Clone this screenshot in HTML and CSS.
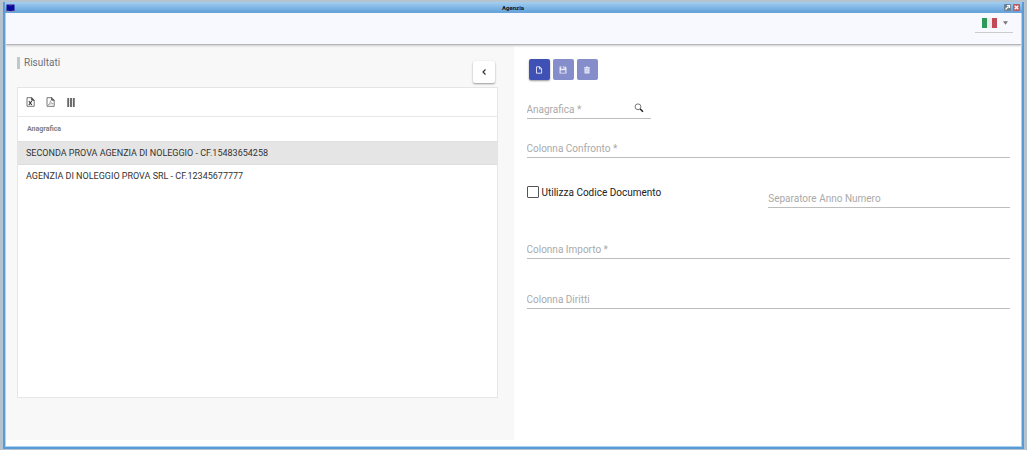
FILE: index.html
```html
<!DOCTYPE html>
<html lang="it">
<head>
<meta charset="utf-8">
<title>Agenzia</title>
<link rel="stylesheet" href="styles.css">
</head>
<body>
<div class="window">
  <div class="titlebar">
    <svg class="app-icon" viewBox="0 0 9 8" aria-hidden="true"><path d="M.5.500h8V7h-8z" fill="#0a0a96"/><path d="M1 .5h2v.6h3V.5h2" fill="none" stroke="#8a6ab0" stroke-width=".6"/><path d="M.5 7h2.500v.6h3V7h2.500" fill="none" stroke="#b080a0" stroke-width=".6"/></svg>
    <h1 class="window-title">Agenzia</h1>
    <div class="window-actions">
      <button class="win-btn" aria-label="Ingrandisci"><svg viewBox="0 0 7 7"><path d="M1.5 5.5l3-3M3 1.5h2.5V4" fill="none" stroke="#fff" stroke-width="1.2"/></svg></button>
      <button class="win-btn win-close" aria-label="Chiudi"><svg viewBox="0 0 7 7"><path d="M1.7 1.7l3.6 3.6M5.3 1.7L1.7 5.3" fill="none" stroke="#fff" stroke-width="1.3"/></svg></button>
    </div>
  </div>
  <header class="topbar">
    <button class="language" aria-label="Lingua: italiano">
      <svg class="flag" viewBox="0 0 15 10"><path d="M0 0h5v10H0z" fill="#2f9a58"/><path d="M5 0h5v10H5z" fill="#ececec"/><path d="M10 0h5v10h-5z" fill="#c24a55"/></svg>
      <svg class="caret" viewBox="0 0 6 4"><path d="M0 0h6L3 4z" fill="#777"/></svg>
    </button>
  </header>
  <main class="content">
    <section class="results">
      <div class="results-head">
        <h2 class="results-title">Risultati</h2>
        <button class="collapse" aria-label="Comprimi"><svg viewBox="0 0 6 8"><path d="M4.5 1.5L2 4l2.5 2.5" fill="none" stroke="#333" stroke-width="1.2"/></svg></button>
      </div>
      <div class="card">
        <div class="tools">
          <button class="tool" aria-label="Esporta Excel"><svg viewBox="0 0 9 10"><path d="M1 .7h4.8L8.2 3v6.3H1z" fill="#fff" stroke="#666" stroke-width=".9"/><path d="M5.6.5v2.7h2.7" fill="#555" stroke="#333" stroke-width=".7"/><path d="M2.8 4l3 4M5.8 4l-3 4" stroke="#333" stroke-width="1.1"/></svg></button>
          <button class="tool" aria-label="Esporta PDF"><svg viewBox="0 0 9 10"><path d="M1 .7h4.8L8.2 3v6.3H1z" fill="#fff" stroke="#666" stroke-width=".9"/><path d="M5.6.5v2.7h2.7" fill="#777" stroke="#333" stroke-width=".7"/><path d="M2 8c1.6-1 2.4-2.6 2.4-4.3C4.5 5.500 5.500 6.700 7.200 6.800 5 6.600 3.500 7 2 8z" fill="none" stroke="#888" stroke-width=".6"/></svg></button>
          <button class="tool" aria-label="Colonne"><svg viewBox="0 0 9 10"><path d="M2.200 1v9M5 1v9M7.800 1v9" stroke="#666" stroke-width="1.900"/></svg></button>
        </div>
        <table class="grid">
          <thead><tr><th scope="col">Anagrafica</th></tr></thead>
          <tbody>
            <tr class="selected"><td>SECONDA PROVA AGENZIA DI NOLEGGIO - CF.15483654258</td></tr>
            <tr><td>AGENZIA DI NOLEGGIO PROVA SRL - CF.12345677777</td></tr>
          </tbody>
        </table>
      </div>
    </section>
    <form class="detail">
      <div class="actions">
        <button type="button" class="action" aria-label="Nuovo"><svg viewBox="0 0 8 8"><path d="M1.500 .8h3.200l1.900 1.900v4.500H1.500zM4.500 .8v2.100h2.100" fill="none" stroke="#fff" stroke-width=".8"/></svg></button>
        <button type="button" class="action" aria-label="Salva" disabled><svg viewBox="0 0 8 8"><path d="M.5.5h5.800L7.500 1.700v5.800h-7z" fill="#e6e8f5"/><path d="M2.200.5h3.200v2.200H2.200zM1.700 4.300h4.600v2.400H1.700z" fill="#858dca"/><path d="M4.200.8h.8v1.500h-.8z" fill="#e6e8f5"/></svg></button>
        <button type="button" class="action" aria-label="Elimina" disabled><svg viewBox="0 0 8 8"><path d="M1 1.300h2V.5h2v.8h2v1H1zM1.500 2.500h5v5h-5z" fill="#e6e8f5"/><path d="M3.200 3.300v3.300M4.800 3.300v3.300" stroke="#858dca" stroke-width=".4"/></svg></button>
      </div>
      <div class="field lookup">
        <input type="text" placeholder="Anagrafica *" aria-label="Anagrafica" required>
        <button type="button" class="search" aria-label="Cerca"><svg viewBox="0 0 10 10"><circle cx="4" cy="3.800" r="2.900" fill="none" stroke="#666" stroke-width=".9"/><path d="M6.200 6l2.800 2.800" stroke="#222" stroke-width="1.500"/></svg></button>
      </div>
      <div class="field confronto"><input type="text" placeholder="Colonna Confronto *" aria-label="Colonna Confronto" required></div>
      <div class="row">
        <label class="check"><input type="checkbox">Utilizza Codice Documento</label>
        <div class="field"><input type="text" placeholder="Separatore Anno Numero" aria-label="Separatore Anno Numero"></div>
      </div>
      <div class="field importo"><input type="text" placeholder="Colonna Importo *" aria-label="Colonna Importo" required></div>
      <div class="field diritti"><input type="text" placeholder="Colonna Diritti" aria-label="Colonna Diritti"></div>
    </form>
  </main>
</div>
</body>
</html>
```
FILE: styles.css
```css
* { box-sizing: border-box; }
body {
  margin: 0;
  min-height: 100vh;
  display: flex;
  padding: 2px 3px 1px;
  background: #b4c3ce;
  font-family: Roboto, "Liberation Sans", sans-serif;
  font-size: 10px;
  color: #333;
}
button { padding: 0; border: 0; background: none; font: inherit; }
svg { display: block; }
h1, h2 { margin: 0; }
.window {
  flex: 1;
  display: flex;
  flex-direction: column;
  background: #fff;
  border: 2px solid #5a9bd5;
  border-top: 0;
  box-shadow: inset 1px 0 #a9d2f3, inset -1px 0 #a9d2f3, inset 0 -1px #a9d2f3;
}
.titlebar {
  height: 11px;
  display: grid;
  grid-template-columns: 1fr auto 1fr;
  align-items: center;
  padding: 0 2px 0 1px;
  background: linear-gradient(#a4cef0, #5f9fd9);
}
.app-icon { width: 9px; height: 8px; }
.window-title { font-size: 6px; line-height: 8px; font-weight: 700; color: #111; }
.window-actions { display: flex; justify-content: flex-end; gap: 2px; }
.win-btn { width: 7px; height: 7px; background: #6c8191; border-radius: 1px; }
.win-close { background: #bd5b60; }
.topbar {
  height: 32px;
  margin: 0 1px;
  display: flex;
  justify-content: flex-end;
  align-items: flex-start;
  padding: 0 8px;
  background: #f8f9ff;
  border-bottom: 1px solid #b5b5bb;
  box-shadow: 0 1px 2px #ccc;
  z-index: 1;
}
.language {
  width: 38px;
  height: 20px;
  display: flex;
  align-items: center;
  gap: 6px;
  padding: 0 5px 0 7px;
  border-bottom: 1px solid #ccc;
}
.flag { width: 15px; height: 10px; }
.caret { width: 5px; height: 4px; }
.content {
  flex: 1;
  display: grid;
  grid-template-columns: 1fr 1fr;
  margin: 0 1px 7px;
}
.results {
  display: flex;
  flex-direction: column;
  padding: 12px 16px 42px 11px;
  background: #f8f8f8;
}
.results-head { display: flex; justify-content: space-between; height: 30px; }
.results-title {
  height: 12px;
  padding-left: 4px;
  border-left: 3px solid #bfc8ca;
  font-size: 10px;
  line-height: 12px;
  font-weight: 400;
  color: #6d7078;
}
.collapse {
  width: 22px;
  height: 22px;
  margin: 4px 3px 0 0;
  display: grid;
  place-items: center;
  background: #fff;
  border-radius: 2px;
  box-shadow: 0 1px 2px #999;
}
.collapse svg { width: 6px; height: 8px; }
.card { flex: 1; background: #fff; border: 1px solid #e5e5e5; }
.tools { display: flex; align-items: center; gap: 11px; height: 28px; padding: 0 8px; }
.tool svg { width: 9px; height: 10px; }
.grid { width: 100%; border-collapse: collapse; }
.grid th {
  height: 25px;
  padding: 0 9px;
  border-top: 1px solid #e8e8e8;
  text-align: left;
  font-size: 7px;
  font-weight: 700;
  color: #808080;
}
.grid td { height: 23px; padding: 0 8px; font-size: 9px; }
.grid .selected td { background: #e5e5e5; border-bottom: 1px solid #ddd; border-top: 1px solid #e0e0e0; }
.detail { padding: 14px 11px 0 13px; }
.actions { display: flex; gap: 3px; padding-left: 2px; }
.action {
  width: 21px;
  height: 21px;
  display: grid;
  place-items: center;
  border-radius: 2px;
  background: #3f51b5;
  box-shadow: 0 1px 2px #999;
}
.action:disabled { background: #858dca; box-shadow: none; }
.action svg { width: 8px; height: 8px; }
.field { display: flex; height: 20px; border-bottom: 1px solid #bdbdbd; }
.field input {
  flex: 1;
  min-width: 0;
  padding: 2px 0 0;
  border: 0;
  outline: 0;
  background: none;
  font: inherit;
  color: #333;
}
.field input::placeholder { color: #aaa; opacity: 1; }
.lookup { width: 124px; margin-top: 19px; }
.search { padding: 0 7px 2px; }
.search svg { width: 10px; height: 10px; }
.confronto { margin-top: 19px; }
.row { display: grid; grid-template-columns: 1fr 1fr; margin-top: 30px; }
.check { display: flex; align-items: center; gap: 3px; height: 8px; color: #222; }
.check input {
  appearance: none;
  width: 12px;
  height: 12px;
  margin: 0;
  border: 1px solid #555;
  border-radius: 1px;
  background: #fff;
}
.importo { margin-top: 31px; }
.diritti { margin-top: 30px; }
```
